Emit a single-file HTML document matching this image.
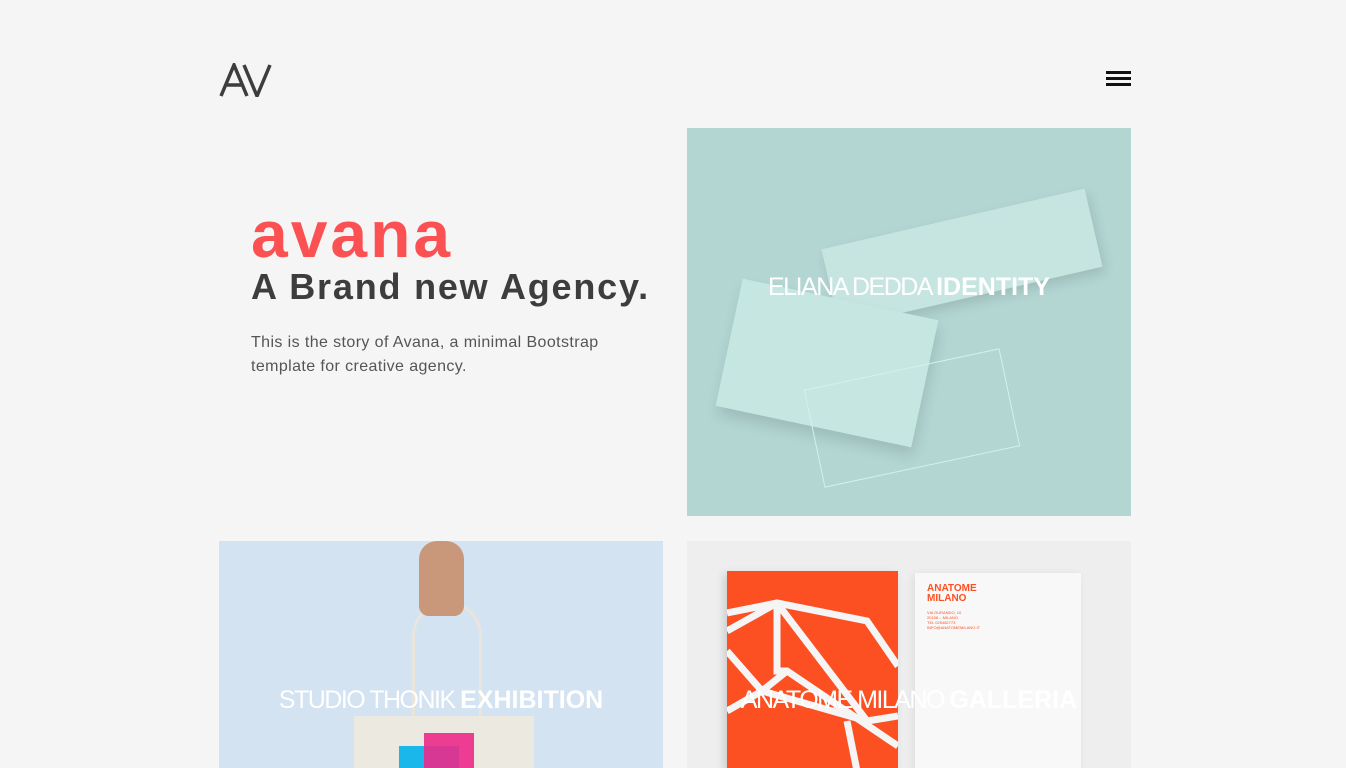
<!DOCTYPE html>
<html><head><meta charset="utf-8"><style>
*{margin:0;padding:0;box-sizing:border-box}
body{width:1346px;height:768px;overflow:hidden;background:#f5f5f5;font-family:"Liberation Sans",sans-serif;position:relative}
.abs{position:absolute}
.tile{position:absolute;overflow:hidden}
.cap{position:absolute;left:0;right:0;text-align:center;color:#fff;font-size:25px;letter-spacing:-1.5px;white-space:nowrap}
.cap b{font-weight:bold;letter-spacing:0}
</style></head><body>
<svg class="abs" style="left:219px;top:63px" width="53" height="34" viewBox="0 0 53 34">
<path d="M2 33 L15 2 L28 33 M8 22 H24" stroke="#3d3d3d" stroke-width="3.5" fill="none"/>
<path d="M25 2 L38 33 L51 2" stroke="#3d3d3d" stroke-width="3.5" fill="none"/>
</svg>
<div class="abs" style="left:1106px;top:71px;width:25px;height:3px;background:#111"></div>
<div class="abs" style="left:1106px;top:77px;width:25px;height:3px;background:#111"></div>
<div class="abs" style="left:1106px;top:83px;width:25px;height:3px;background:#111"></div>

<div class="abs" style="left:251px;top:196px;font-size:66px;font-weight:bold;color:#fb5153;line-height:76px;letter-spacing:3px">avana</div>
<div class="abs" style="left:251px;top:265px;font-size:36px;font-weight:bold;color:#3d3d3d;line-height:44px;letter-spacing:1.8px">A Brand new Agency.</div>
<div class="abs" style="left:251px;top:331px;font-size:16px;color:#555;line-height:24px;width:420px;letter-spacing:0.4px">This is the story of Avana, a minimal Bootstrap<br>template for creative agency.</div>

<div class="tile" style="left:687px;top:128px;width:444px;height:388px;background:#b3d6d3">
<div class="abs" style="left:140px;top:90px;width:270px;height:80px;background:#c6e5e1;transform:rotate(-13deg);box-shadow:2px 6px 12px rgba(0,0,0,.12)"></div>
<div class="abs" style="left:40px;top:170px;width:200px;height:130px;background:#c6e6e2;transform:rotate(12deg);box-shadow:3px 8px 14px rgba(0,0,0,.12)"></div>
<div class="abs" style="left:125px;top:240px;width:200px;height:100px;border:1px solid #d6efec;transform:rotate(-12deg)"></div>
<div class="cap" style="top:145px">ELIANA DEDDA <b>IDENTITY</b></div>
</div>

<div class="tile" style="left:219px;top:541px;width:444px;height:227px;background:#d3e3f2">
<div class="abs" style="left:193px;top:60px;width:70px;height:180px;border:3px solid #e9e5dc;border-bottom:none;border-radius:35px 35px 0 0"></div>
<div class="abs" style="left:200px;top:0;width:45px;height:75px;background:#c9987a;border-radius:18px 18px 10px 10px"></div>
<div class="abs" style="left:135px;top:175px;width:180px;height:60px;background:#ece9e1"></div>
<div class="abs" style="left:180px;top:205px;width:60px;height:30px;background:#1ab7ea"></div>
<div class="abs" style="left:205px;top:192px;width:50px;height:40px;background:#ec2a8a;opacity:.9"></div>
<div class="cap" style="top:145px">STUDIO THONIK <b>EXHIBITION</b></div>
</div>

<div class="tile" style="left:687px;top:541px;width:444px;height:227px;background:#eeeeee">
<div class="abs" style="left:40px;top:30px;width:171px;height:200px;background:#fd5022;box-shadow:-3px 3px 8px rgba(0,0,0,.15)">
<svg width="171" height="200" viewBox="0 0 171 200"><path d="M0 42 L50 32 L140 50 L171 95 M50 32 L50 100 L60 100 L171 175 M50 32 L140 150 M0 60 L50 32 M0 80 L35 120 L60 100 M35 120 L0 140 M35 120 L140 150 L171 145 M120 150 L130 200" stroke="#f5f5f5" stroke-width="7" fill="none"/></svg></div>
<div class="abs" style="left:228px;top:32px;width:166px;height:200px;background:#f8f8f8;box-shadow:-2px 2px 8px rgba(0,0,0,.08)">
<div style="color:#fd5022;font-size:10px;font-weight:bold;padding:11px 0 0 12px;line-height:10px">ANATOME<br>MILANO</div>
<div style="color:#fd5022;font-size:4px;padding:6px 0 0 12px;line-height:5px">VIA DURANDO, 10<br>20158 – MILANO<br>TEL 025482773<br>INFO@ANATOMEMILANO.IT</div>
</div>
<div class="cap" style="top:145px">ANATOME MILANO <b>GALLERIA</b></div>
</div>
</body></html>
